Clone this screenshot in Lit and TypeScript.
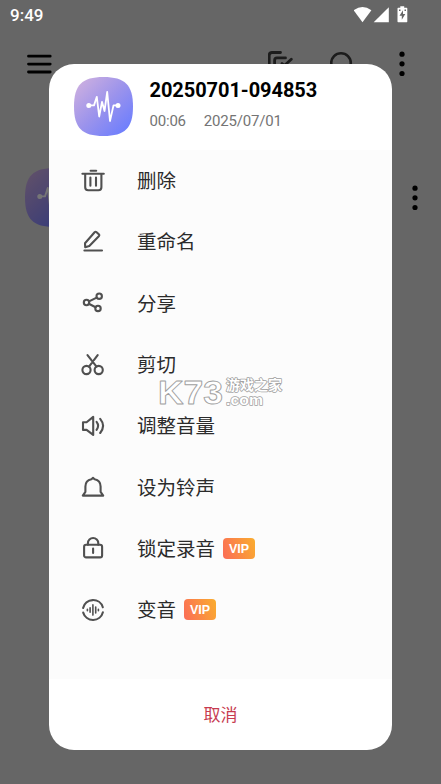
import { LitElement, html, css, svg } from "lit";
import { customElement, property } from "lit/decorators.js";

const icons: Record<string, unknown> = {
  trash: svg`<path d="M1.4 4.7H22.8M9.6 1.7h5.6M4.2 4.700V18.2q0 3 3 3h10.2q3 0 3-3V4.700M9.4 8.6v8.200M15 8.600v8.200"/>`,
  pencil: svg`<path d="M4 13.2 13.6 2.200q1-.9 2 0l2.200 2.100q.9.9 0 1.900L8.300 16 4.200 17.200ZM3.400 20.500H21"/>`,
  share: svg`<circle cx="5.5" cy="11.5" r="2.7"/><circle cx="18.2" cy="5.2" r="2.7"/><circle cx="17" cy="17.4" r="2.7"/><path d="M8 10.400 15.700 6.600M7.800 12.800 14.600 16.200"/>`,
  scissors: svg`<circle cx="5.5" cy="17" r="4.1"/><circle cx="17.7" cy="17" r="4.1"/><path d="M6.500 2.100 15.500 13.600M16.700 2.100 12.900 7.200M10.700 10.200 8 13.600"/>`,
  volume: svg`<path d="M2 8.200H5.600L12.200 2.900V20.900L5.600 15.900H2ZM15.600 7.900q3 3.900 0 7.900M19.200 4.800q5.800 7 0 14.200"/>`,
  bell: svg`<path d="M4.400 16.800V11.600C4.400 7.500 7 4.800 10.400 4.200L12 2.900l1.600 1.300C17 4.800 19.600 7.500 19.600 11.600V16.800L22.200 20.600H1.800Z"/>`,
  lock: svg`<rect x="3.1" y="8.8" width="18" height="12.6" rx="2"/><path d="M6.900 8.800V7.200a5.200 5.200 0 0 1 10.400 0V8.800M12.100 12.600v4.400"/>`,
  voice: svg`<path d="M2.100 10A10.200 10.200 0 0 1 21.800 9.300M21.900 14.200A10.200 10.200 0 0 1 2.200 14.600"/><path stroke-width="1.6" d="M6.400 11.200v1.600M9.100 9.700v4.600M11.900 6.900v10.200M14.700 9v6M17.400 11.200v1.600"/>`,
};

@customElement("wave-tile")
class WaveTile extends LitElement {
  static styles = css`
    :host { display: block; width: 59px; height: 59px; flex: none; }
    svg { display: block; }
  `;
  render() {
    return html`<svg width="59" height="59" viewBox="0 0 59 59">
      <defs><linearGradient id="g" x1="0" y1="0" x2="1" y2="1">
        <stop offset="0.08" stop-color="#cbaee0"/><stop offset="0.5" stop-color="#9b93ec"/><stop offset="0.95" stop-color="#687cff"/>
      </linearGradient></defs>
      <path fill="url(#g)" d="M29.500 0C51 0 59 8 59 29.500S51 59 29.500 59 0 51 0 29.500 8 0 29.500 0Z"/>
      <path fill="none" stroke="#fff" stroke-width="1.8" stroke-linejoin="round" d="M15 28.400H20L22.800 19.800 25.200 39.500 28 24.800 30.500 34 33.200 15 36 44 39.500 28.400H44"/>
      <circle cx="14.800" cy="28.400" r="2.500" fill="#fff"/><circle cx="44" cy="28.400" r="2.500" fill="#fff"/>
    </svg>`;
  }
}

@customElement("menu-row")
class MenuRow extends LitElement {
  @property() icon = "";
  @property() label = "";
  @property({ type: Boolean }) vip = false;
  static styles = css`
    :host { display: flex; align-items: center; height: 61.3px; padding-left: 32px; }
    svg { width: 24px; height: 24px; flex: none; fill: none; stroke: #505050; stroke-width: 2.1; stroke-linejoin: round; stroke-linecap: round; }
    .label { margin-left: 32px; padding-bottom: 1.2px; font: 19.5px/28px "Noto Sans CJK SC", sans-serif; color: #2b2b2b; }
    .vip { margin-left: 8px; width: 32px; height: 21px; border-radius: 4px; background: linear-gradient(70deg, #fb6c57, #faad2e); color: #fff; font: bold 12.5px/22px "Liberation Sans", sans-serif; text-align: center; }
  `;
  render() {
    return html`<svg viewBox="0 0 24 24">${icons[this.icon]}</svg><span class="label">${this.label}</span>${this.vip ? html`<span class="vip">VIP</span>` : null}`;
  }
}

@customElement("app-root")
class AppRoot extends LitElement {
  static styles = css`
    :host { display: block; position: relative; width: 441px; height: 784px; overflow: hidden; background: #666; font-family: Roboto, "Noto Sans CJK SC", sans-serif; }
    svg { display: block; }
    .status { display: flex; justify-content: space-between; height: 30px; padding: 0 33px 0 10px; color: #fff; font-size: 17px; font-weight: 500; line-height: 31px; }
    .bar { display: flex; align-items: center; height: 67px; padding: 0 36.500px 0 27px; }
    .actions { display: flex; margin-left: auto; align-items: center; }
    .copy { margin-right: 36px; }
    .search { margin-right: 43px; }
    .record { display: flex; align-items: center; justify-content: space-between; margin-top: 71px; padding: 0 23px 0 24.500px; }
    .dim { filter: brightness(.46) saturate(1.15); }
    .dialog { position: absolute; left: 49px; top: 64px; width: 343px; height: 686px; border-radius: 25px; background: #fff; overflow: hidden; display: flex; flex-direction: column; }
    .head { display: flex; height: 86px; box-sizing: border-box; padding: 13px 0 0 24.500px; gap: 17px; }
    .title { font-size: 20px; line-height: 24px; font-weight: 700; letter-spacing: -.06px; color: #000; margin-top: 1px; }
    .meta { display: flex; gap: 18px; font-size: 15px; line-height: 18px; letter-spacing: -.2px; color: #747474; margin-top: 10px; }
    .list { flex: 1; background: #fcfcfc; }
    .cancel { height: 71px; box-sizing: border-box; padding-bottom: 2px; display: flex; align-items: center; justify-content: center; font: 17px/24px "Noto Sans CJK SC", sans-serif; color: #c73b50; }
    .mark { position: absolute; left: 155px; top: 374px; }
  `;
  dots() {
    return html`<svg width="6" height="26" viewBox="0 0 6 26"><circle cx="3" cy="3.200" r="2.600"/><circle cx="3" cy="12.800" r="2.600"/><circle cx="3" cy="22.500" r="2.600"/></svg>`;
  }
  render() {
    return html`
      <div class="status"><span>9:49</span>
        <svg width="54" height="30" viewBox="0 0 54 30" fill="#fff">
          <path d="M-.3 10.300Q8.500 3.700 17.400 10.300L8.500 22.200Z"/><path d="M19.700 22.200 34.800 7.200V22.200Z"/>
          <path d="M44.200 7.800H46.300V6.200H50.200V7.800H52.700Q53.300 7.800 53.300 8.500V21.500Q53.300 22.200 52.700 22.200H44.200Q43.500 22.200 43.500 21.500V8.500Q43.500 7.800 44.200 7.800Z"/>
          <path fill="#666" d="M49 10.200 45.500 15.700H47.800V19.700L51.300 14.100H49ZM45 9.500h1.500v1.500H45zM50.500 9.500h1.500v1.500h-1.500z"/>
        </svg>
      </div>
      <div class="bar">
        <svg width="25" height="20" viewBox="0 0 25 20" stroke="#000" stroke-width="2.800" stroke-linecap="round"><path d="M1.500 2.200h21.700M1.500 10.100h21.700M1.500 18h21.700"/></svg>
        <div class="actions">
          <svg class="copy" width="26" height="26" viewBox="0 0 26 26" fill="none" stroke="#1c1c1c" stroke-width="2.800" stroke-linecap="round"><path d="M12.500 1.500H4Q1.200 1.500 1.200 4.500V19M17.500 6.900H9Q6.600 6.900 6.600 9.500V23H22M14 12.500 16.500 14.500 23.300 8.200"/></svg>
          <svg class="search" width="26" height="26" viewBox="0 0 26 26" fill="none" stroke="#1c1c1c" stroke-width="2.600"><circle cx="11" cy="12" r="9.800"/><path d="m18 19 5 5"/></svg>
          ${this.dots()}
        </div>
      </div>
      <div class="record"><wave-tile class="dim"></wave-tile>${this.dots()}</div>
      <section class="dialog">
        <div class="head"><wave-tile></wave-tile><div>
          <div class="title">20250701-094853</div>
          <div class="meta"><span>00:06</span><span>2025/07/01</span></div>
        </div></div>
        <div class="list">
          <menu-row icon="trash" label="删除"></menu-row>
          <menu-row icon="pencil" label="重命名"></menu-row>
          <menu-row icon="share" label="分享"></menu-row>
          <menu-row icon="scissors" label="剪切"></menu-row>
          <menu-row icon="volume" label="调整音量"></menu-row>
          <menu-row icon="bell" label="设为铃声"></menu-row>
          <menu-row icon="lock" label="锁定录音" vip></menu-row>
          <menu-row icon="voice" label="变音" vip></menu-row>
        </div>
        <div class="cancel">取消</div>
      </section>
      <svg class="mark" width="132" height="36" fill="#fff" stroke="#a0a0a0" font-weight="bold" stroke-linejoin="round">
        <text x="3" y="30" font-family="Liberation Sans, sans-serif" font-size="33" textLength="65" lengthAdjust="spacingAndGlyphs" stroke-width=".9">K73</text>
        <g paint-order="stroke" stroke-width="1.500">
          <text x="71" y="16.300" font-family="Noto Sans CJK SC, sans-serif" font-size="13.500" textLength="56" lengthAdjust="spacingAndGlyphs">游戏之家</text>
          <text x="71" y="30.500" font-family="Liberation Sans, sans-serif" font-size="15.500" textLength="37" lengthAdjust="spacingAndGlyphs">.com</text>
        </g>
      </svg>`;
  }
}
